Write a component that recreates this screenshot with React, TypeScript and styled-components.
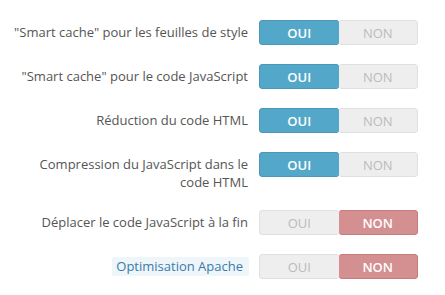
import React from 'react'
import styled, { createGlobalStyle } from 'styled-components'

const GlobalStyle = createGlobalStyle`
  body {
    margin: 0;
    background: #fff;
    font-family: 'Open Sans', 'Noto Sans', sans-serif;
  }
`

const Form = styled.div`
  display: flex;
  flex-direction: column;
  row-gap: 19px;
  padding: 20px 0 0 8px;
`

const Row = styled.div`
  display: flex;
  align-items: flex-start;
  column-gap: 11px;
`

const Label = styled.div<{ $hint?: boolean }>`
  width: 240px;
  text-align: right;
  font-size: 13px;
  line-height: 18px;
  color: #555;
  padding-top: 3px;
  span {
    display: inline-block;
    line-height: 19px;
    padding: 0 6px 0 4px;
    margin-right: -1px;
    border-radius: 2px;
    background: #eef6fa;
    color: #3a7aaa;
  }
`

const Switch = styled.div`
  display: flex;
  width: 159px;
  height: 25px;
  border-radius: 3px;
  overflow: hidden;
`

const Option = styled.div<{ $on: boolean; $kind: 'yes' | 'no' }>`
  flex: 1;
  display: flex;
  align-items: center;
  justify-content: center;
  font-size: 13px;
  font-weight: ${p => (p.$on ? 600 : 400)};
  color: ${p => (p.$on ? '#fff' : '#bbb')};
  background: ${p => (!p.$on ? '#eeeeee' : p.$kind === 'yes' ? '#53a8ca' : '#d48f91')};
  border: 1px solid ${p => (!p.$on ? '#e0e0e0' : p.$kind === 'yes' ? '#4a97b6' : '#c77b7d')};
  border-radius: 3px;
  ${p => (p.$kind === 'yes' ? 'border-right: none;' : 'border-left: none;')}
  box-sizing: border-box;
`

const rows = [
  { label: '"Smart cache" pour les feuilles de style', on: true },
  { label: '"Smart cache" pour le code JavaScript', on: true },
  { label: 'Réduction du code HTML', on: true },
  { label: 'Compression du JavaScript dans le code HTML', on: true },
  { label: 'Déplacer le code JavaScript à la fin', on: false },
  { label: 'Optimisation Apache', on: false, hint: true },
]

const App = () => {
  return (
    <>
      <GlobalStyle />
      <Form>
        {rows.map(r => (
          <Row key={r.label}>
            <Label>{r.hint ? <span>{r.label}</span> : r.label}</Label>
            <Switch>
              <Option $on={r.on} $kind="yes">OUI</Option>
              <Option $on={!r.on} $kind="no">NON</Option>
            </Switch>
          </Row>
        ))}
      </Form>
    </>
  )
}

export default App
